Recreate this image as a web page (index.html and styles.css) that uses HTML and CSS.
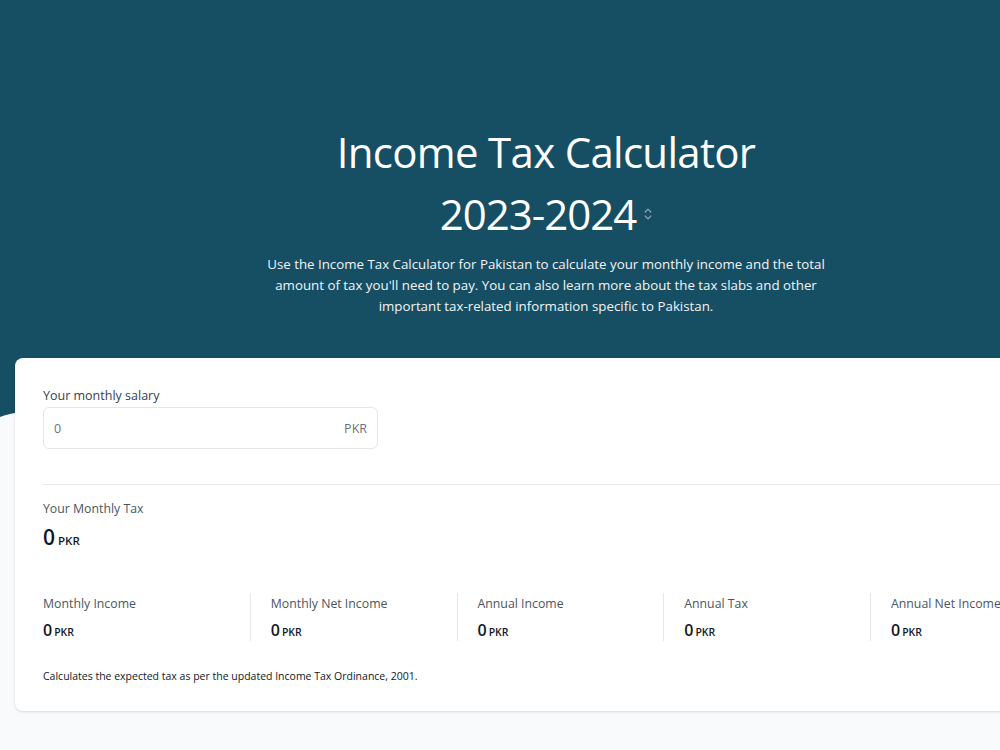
FILE: index.html
```html
<!DOCTYPE html>
<html lang="en">
<head>
<meta charset="utf-8">
<title>Income Tax Calculator 2023-2024</title>
<link rel="stylesheet" href="styles.css">
</head>
<body>
<div class="page">
  <header class="hero">
    <h1 class="hero-title">Income Tax Calculator</h1>
    <div class="year-select">
      <span class="year-value">2023-2024</span>
      <svg class="year-chevrons" width="8" height="14" viewBox="0 0 8 14" aria-hidden="true">
        <path d="M1.2 5 L4 2.2 L6.8 5" fill="none" stroke="currentColor" stroke-width="1.2" stroke-linecap="round" stroke-linejoin="round"/>
        <path d="M1.2 9 L4 11.8 L6.8 9" fill="none" stroke="currentColor" stroke-width="1.2" stroke-linecap="round" stroke-linejoin="round"/>
      </svg>
    </div>
    <p class="hero-text">Use the Income Tax Calculator for Pakistan to calculate your monthly income and the total amount of tax you'll need to pay. You can also learn more about the tax slabs and other important tax-related information specific to Pakistan.</p>
  </header>

  <main class="calc-card">
    <label class="field-label" for="salary">Your monthly salary</label>
    <div class="salary-input">
      <input id="salary" class="salary-field" type="text" placeholder="0">
      <span class="salary-unit">PKR</span>
    </div>

    <hr class="divider">

    <div class="result-label">Your Monthly Tax</div>
    <div class="result-value"><span class="amount">0</span><span class="unit">PKR</span></div>

    <div class="stats">
      <div class="stat">
        <div class="stat-label">Monthly Income</div>
        <div class="stat-value"><span class="amount">0</span><span class="unit">PKR</span></div>
      </div>
      <div class="stat">
        <div class="stat-label">Monthly Net Income</div>
        <div class="stat-value"><span class="amount">0</span><span class="unit">PKR</span></div>
      </div>
      <div class="stat">
        <div class="stat-label">Annual Income</div>
        <div class="stat-value"><span class="amount">0</span><span class="unit">PKR</span></div>
      </div>
      <div class="stat">
        <div class="stat-label">Annual Tax</div>
        <div class="stat-value"><span class="amount">0</span><span class="unit">PKR</span></div>
      </div>
      <div class="stat">
        <div class="stat-label">Annual Net Income</div>
        <div class="stat-value"><span class="amount">0</span><span class="unit">PKR</span></div>
      </div>
    </div>

    <p class="footnote">Calculates the expected tax as per the updated Income Tax Ordinance, 2001.</p>
  </main>
</div>
</body>
</html>
```

FILE: styles.css
```css
html, body {
  margin: 0;
  padding: 0;
}

body {
  background: #f8fafc;
  font-family: "Open Sans", "Noto Sans", sans-serif;
  color: #111827;
  overflow: hidden;
}

.page {
  width: 1092px;
  min-height: 750px;
}

/* Dark hero band; its bottom edge dips into a soft wave on the left */
.hero {
  background: #164e63;
  color: #ffffff;
  text-align: center;
  padding: 122px 0 100px;
  clip-path: path('M0 0 H1092 V400 Q 60 390 0 417 Z');
}

.hero-title {
  margin: 0;
  font-size: 42px;
  line-height: 60px;
  font-weight: 400;
  letter-spacing: -0.7px;
}

.year-select {
  display: flex;
  justify-content: center;
  align-items: center;
  gap: 8px;
  margin-top: 2px;
  font-size: 42px;
  line-height: 60px;
  letter-spacing: -1px;
}

.year-chevrons {
  color: #94a3b8;
}

.hero-text {
  width: 560px;
  margin: 10px auto 0;
  font-size: 13.3px;
  line-height: 21px;
  color: #f1f5f9;
}

/* Calculator card */
.calc-card {
  position: relative;
  margin: -59px 15px 0;
  background: #ffffff;
  border-radius: 8px;
  box-shadow: 0 1px 3px rgba(15, 23, 42, 0.10), 0 1px 2px rgba(15, 23, 42, 0.04);
  padding: 28px 28px 27px;
}

.field-label {
  display: block;
  font-size: 12.5px;
  line-height: 18px;
  font-weight: 500;
  color: #374151;
  margin-top: 1px;
}

.salary-input {
  display: flex;
  align-items: center;
  width: 335px;
  height: 42px;
  box-sizing: border-box;
  margin-top: 2px;
  border: 1px solid #e5e7eb;
  border-radius: 6px;
  padding: 0 10px;
}

.salary-field {
  flex: 1;
  min-width: 0;
  border: 0;
  outline: none;
  padding: 0;
  font-family: inherit;
  font-size: 12.5px;
  color: #374151;
  background: transparent;
}

.salary-field::placeholder {
  color: #6b7280;
}

.salary-unit {
  font-size: 12.5px;
  color: #6b7280;
}

.divider {
  margin: 35px 0 0;
  border: 0;
  border-top: 1px solid #e5e7eb;
}

.result-label {
  margin-top: 15px;
  font-size: 12.3px;
  line-height: 18px;
  color: #4b5563;
}

.result-value {
  margin-top: 5px;
  line-height: 28px;
}

.result-value .amount {
  font-size: 21px;
  font-weight: 600;
}

.result-value .unit {
  margin-left: 3px;
  font-size: 11.5px;
  font-weight: 600;
}

.stats {
  display: grid;
  grid-template-columns: repeat(5, 206.75px);
  margin-top: 38px;
}

.stat {
  padding-top: 2px;
  height: 48px;
  box-sizing: border-box;
}

.stat + .stat {
  border-left: 1px solid #e5e7eb;
  padding-left: 20px;
}

.stat-label {
  font-size: 12.3px;
  line-height: 18px;
  color: #4b5563;
  white-space: nowrap;
}

.stat-value {
  margin-top: 6px;
  line-height: 22px;
}

.stat-value .amount {
  font-size: 16px;
  font-weight: 600;
}

.stat-value .unit {
  margin-left: 2px;
  font-size: 10.5px;
  font-weight: 600;
}

.footnote {
  margin: 27px 0 0;
  font-size: 10.5px;
  line-height: 16px;
  color: #111827;
}
```
